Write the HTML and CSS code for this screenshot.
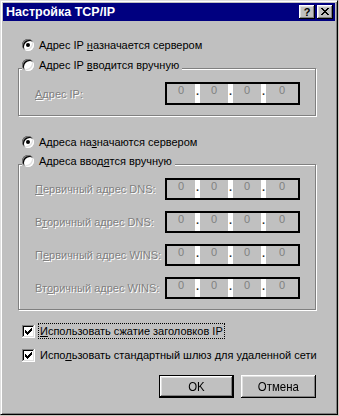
FILE: index.html
```html
<!DOCTYPE html>
<html lang="ru">
<head>
<meta charset="utf-8">
<title>Настройка TCP/IP</title>
<link rel="stylesheet" href="styles.css">
</head>
<body>
<div class="window">
  <div class="titlebar">
    <span class="title">Настройка TCP/IP</span>
    <div class="title-buttons">
      <button class="tbtn help">?</button>
      <button class="tbtn close"><svg width="8" height="7" viewBox="0 0 8 7" shape-rendering="crispEdges"><path fill="#000" d="M0 0h2v1H0zM6 0h2v1H6zM1 1h2v1H1zM5 1h2v1H5zM2 2h4v1H2zM3 3h2v1H3zM2 4h4v1H2zM1 5h2v1H1zM5 5h2v1H5zM0 6h2v1H0zM6 6h2v1H6z"/></svg></button>
    </div>
  </div>
  <div class="content">
    <div class="opt first"><span class="radio checked"></span><span class="txt">Адрес IP <u>н</u>азначается сервером</span></div>

    <div class="group g1">
      <div class="opt legend"><span class="radio"></span><span class="txt">Адрес IP <u>в</u>водится вручную</span></div>
      <div class="rows">
        <div class="field-row">
          <span class="label"><u>А</u>дрес IP:</span>
          <div class="ip"><span class="oct">0</span><span class="sep">.</span><span class="oct">0</span><span class="sep">.</span><span class="oct">0</span><span class="sep">.</span><span class="oct last">0</span></div>
        </div>
      </div>
    </div>

    <div class="opt second"><span class="radio checked"></span><span class="txt">Адреса на<u>з</u>начаются сервером</span></div>

    <div class="group g2">
      <div class="opt legend"><span class="radio"></span><span class="txt">Адреса ввод<u>я</u>тся вручную</span></div>
      <div class="rows">
        <div class="field-row">
          <span class="label"><u>П</u>ервичный адрес DNS:</span>
          <div class="ip"><span class="oct">0</span><span class="sep">.</span><span class="oct">0</span><span class="sep">.</span><span class="oct">0</span><span class="sep">.</span><span class="oct last">0</span></div>
        </div>
        <div class="field-row">
          <span class="label">В<u>т</u>оричный адрес DNS:</span>
          <div class="ip"><span class="oct">0</span><span class="sep">.</span><span class="oct">0</span><span class="sep">.</span><span class="oct">0</span><span class="sep">.</span><span class="oct last">0</span></div>
        </div>
        <div class="field-row">
          <span class="label">П<u>е</u>рвичный адрес WINS:</span>
          <div class="ip"><span class="oct">0</span><span class="sep">.</span><span class="oct">0</span><span class="sep">.</span><span class="oct">0</span><span class="sep">.</span><span class="oct last">0</span></div>
        </div>
        <div class="field-row">
          <span class="label">Вт<u>о</u>ричный адрес WINS:</span>
          <div class="ip"><span class="oct">0</span><span class="sep">.</span><span class="oct">0</span><span class="sep">.</span><span class="oct">0</span><span class="sep">.</span><span class="oct last">0</span></div>
        </div>
      </div>
    </div>

    <div class="check-row c1">
      <span class="checkbox"><svg width="7" height="7" viewBox="0 0 7 7" shape-rendering="crispEdges"><path fill="#000" d="M0 2h1v3H0zM1 3h1v3H1zM2 4h1v3H2zM3 3h1v3H3zM4 2h1v3H4zM5 1h1v3H5zM6 0h1v3H6z"/></svg></span>
      <span class="ctxt focus"><u>И</u>спользовать сжатие заголовков IP</span>
    </div>
    <div class="check-row c2">
      <span class="checkbox"><svg width="7" height="7" viewBox="0 0 7 7" shape-rendering="crispEdges"><path fill="#000" d="M0 2h1v3H0zM1 3h1v3H1zM2 4h1v3H2zM3 3h1v3H3zM4 2h1v3H4zM5 1h1v3H5zM6 0h1v3H6z"/></svg></span>
      <span class="ctxt">Испо<u>л</u>ьзовать стандартный шлюз для удаленной сети</span>
    </div>

    <div class="buttons">
      <button class="btn default"><span class="btxt">OK</span></button>
      <button class="btn"><span class="btxt">Отмена</span></button>
    </div>
  </div>
</div>
</body>
</html>
```

FILE: styles.css
```css
* { box-sizing: border-box; }

body {
  margin: 0;
  background: #cbc6bd;
  font-family: "Liberation Sans", Arial, sans-serif;
  font-size: 11px;
  color: #000;
}

.window {
  width: 338px;
  height: 415px;
  background: #c0c0c0;
  border: 1px solid;
  border-color: #dfdfdf #000 #000 #dfdfdf;
  box-shadow: inset 1px 1px 0 #fff, inset -1px -1px 0 #808080;
  padding: 2px;
  display: flex;
  flex-direction: column;
}

.titlebar {
  height: 18px;
  background: #000080;
  display: flex;
  align-items: center;
  justify-content: space-between;
  padding: 0 2px 0 3px;
}

.title {
  color: #fff;
  font-weight: bold;
  font-size: 12.5px;
  line-height: 14px;
  white-space: nowrap;
}

.title-buttons {
  display: flex;
  gap: 2px;
}

.tbtn {
  width: 16px;
  height: 14px;
  padding: 0;
  border: 0;
  background: #c0c0c0;
  box-shadow: inset -1px -1px #000, inset 1px 1px #fff, inset -2px -2px #808080, inset 2px 2px #dfdfdf;
  display: flex;
  align-items: center;
  justify-content: center;
  font-family: "Liberation Sans", Arial, sans-serif;
  font-weight: bold;
  font-size: 11px;
  line-height: 14px;
  color: #000;
}

.tbtn.close svg { display: block; margin: 0 0 1px 0; }
.tbtn.help { padding-bottom: 1px; }

.content {
  padding: 16px 19px 0 15px;
  display: flex;
  flex-direction: column;
}

.opt {
  display: flex;
  align-items: center;
  height: 16px;
  padding-left: 4px;
}

.opt .txt { line-height: 16px; white-space: nowrap; }

.radio {
  width: 12px;
  height: 12px;
  border-radius: 50%;
  background: #fff;
  box-shadow: inset 1px 1px 0 #808080, inset -1px -1px 0 #fff, inset 2px 2px 0 #000, inset -2px -2px 0 #dfdfdf;
  margin-right: 5px;
  flex: none;
  display: flex;
  align-items: center;
  justify-content: center;
}

.radio.checked::after {
  content: "";
  width: 4px;
  height: 4px;
  border-radius: 50%;
  background: #000;
}

.group {
  border: 1px solid #808080;
  box-shadow: inset 1px 1px 0 #fff, 1px 1px 0 #fff;
  padding-bottom: 10px;
}

.g1 { margin-top: 15px; }
.g2 { margin-top: 14px; }

.legend {
  width: fit-content;
  margin: -12px 0 0 3px;
  padding: 0 3px 0 0;
  background: #c0c0c0;
}

.rows {
  display: flex;
  flex-direction: column;
  gap: 10px;
  margin-top: 9px;
}

.g2 .rows { gap: 11px; }

.field-row {
  display: flex;
  align-items: center;
  padding-left: 16px;
}

.label {
  width: 130px;
  color: #808080;
  text-shadow: 1px 1px 0 #fff;
  white-space: nowrap;
  line-height: 14px;
}

.ip {
  width: 135px;
  height: 23px;
  border: 2px solid #000;
  background: #fff;
  display: flex;
}

.g2 .ip { height: 22px; }

.oct {
  width: 28px;
  background: #c0c0c0;
  color: #808080;
  text-align: center;
  line-height: 13px;
}

.oct.last { flex: 1; }

.sep {
  width: 5px;
  text-align: center;
  line-height: 13px;
  padding-top: 1px;
  color: #303030;
  font-weight: bold;
}

.second { margin-top: 18px; }

.check-row {
  display: flex;
  align-items: center;
  height: 16px;
  padding-left: 4px;
}

.c1 { margin-top: 13px; }
.c2 { margin-top: 8px; }

.checkbox {
  width: 13px;
  height: 13px;
  background: #fff;
  box-shadow: inset -1px -1px #fff, inset 1px 1px #808080, inset -2px -2px #dfdfdf, inset 2px 2px #000;
  display: flex;
  align-items: center;
  justify-content: center;
  margin-right: 3px;
  flex: none;
}

.checkbox svg { display: block; }

.ctxt {
  border: 1px dotted transparent;
  padding: 0 1px;
  line-height: 14px;
  white-space: nowrap;
}

.ctxt.focus { border-color: #000; }

.buttons {
  display: flex;
  justify-content: flex-end;
  gap: 7px;
  margin-top: 12px;
}

.btn {
  width: 75px;
  height: 23px;
  padding: 0;
  border: 0;
  background: #c0c0c0;
  font-family: "Liberation Sans", Arial, sans-serif;
  font-size: 13px;
  color: #000;
  box-shadow: inset -1px -1px #000, inset 1px 1px #fff, inset -2px -2px #808080, inset 2px 2px #dfdfdf;
  display: flex;
  align-items: center;
  justify-content: center;
}

.btxt {
  display: inline-block;
  transform: scaleX(0.88);
  line-height: 15px;
}

.btn.default {
  border: 1px solid #000;
}
```
